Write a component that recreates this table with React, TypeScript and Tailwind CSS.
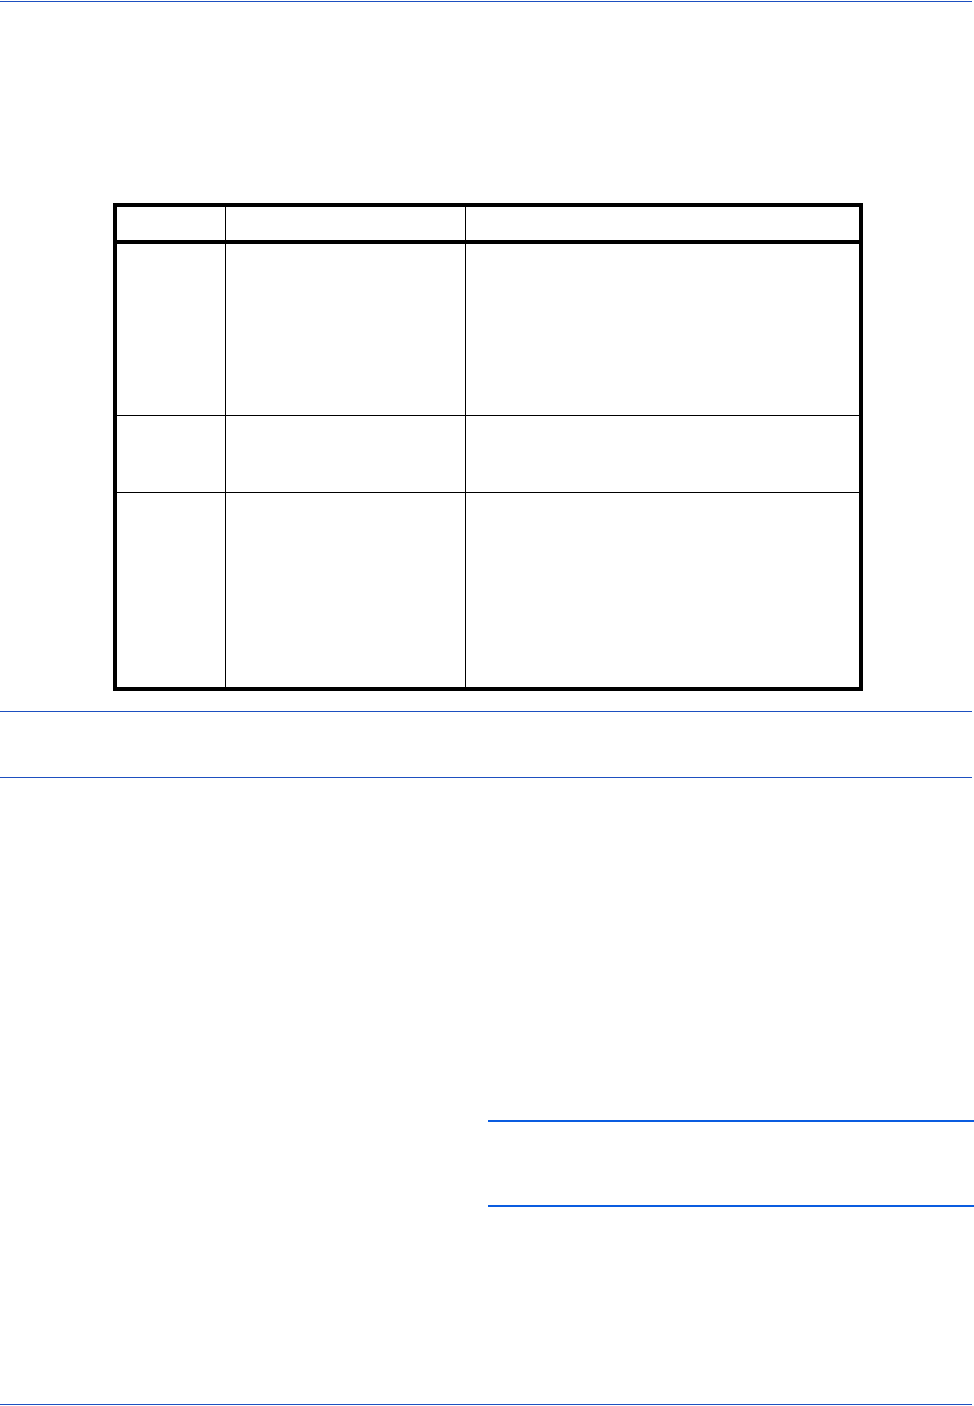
export default function App() {
  const rows = [
    { h: "h-[171px]", line: true },
    { h: "h-[76px]", line: true },
    { h: "h-[194px]", line: false },
  ];

  return (
    <div className="w-[974px] min-h-[1406px] bg-white font-['Liberation_Sans',Arial,sans-serif]">
      {/* page header rule */}
      <div className="pt-px">
        <div className="h-px w-[972px] bg-[#1e50c0]" />
      </div>

      {/* empty table */}
      <div className="mt-[201px] ml-[113px] w-[750px] border-4 border-black">
        <div className="flex h-[37px] border-b-4 border-black">
          <div className="w-[109px] border-r border-black" />
          <div className="w-[240px] border-r border-black" />
          <div className="flex-1" />
        </div>
        {rows.map((r, i) => (
          <div key={i} className={`flex ${r.line ? "border-b border-black" : ""}`}>
            <div className={`${r.h} w-[109px] border-r border-black`} />
            <div className={`${r.h} w-[240px] border-r border-black`} />
            <div className="flex-1" />
          </div>
        ))}
      </div>

      {/* note block rules */}
      <div className="mt-[20px] h-px w-[972px] bg-[#1e50c0]" />
      <div className="mt-[65px] h-px w-[972px] bg-[#1e50c0]" />

      {/* side note rules */}
      <div className="ml-[488px] mt-[342px] h-[2px] w-[486px] bg-[#0a5ce0]" />
      <div className="ml-[488px] mt-[83px] h-[2px] w-[486px] bg-[#0a5ce0]" />

      {/* footer rule */}
      <div className="mt-[197px] h-px w-[972px] bg-[#1e50c0]" />
    </div>
  );
}
